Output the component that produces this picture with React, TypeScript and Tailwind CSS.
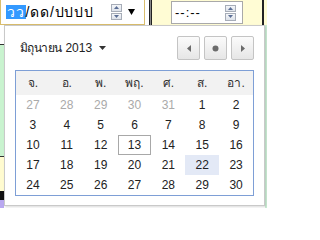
const weekdays = ["จ.", "อ.", "พ.", "พฤ.", "ศ.", "ส.", "อา."];

const weeks = [
  [27, 28, 29, 30, 31, 1, 2],
  [3, 4, 5, 6, 7, 8, 9],
  [10, 11, 12, 13, 14, 15, 16],
  [17, 18, 19, 20, 21, 22, 23],
  [24, 25, 26, 27, 28, 29, 30],
];

function Spinner() {
  return (
    <div className="flex flex-col w-[11px] h-[16px] gap-px">
      <div className="flex-1 flex items-center justify-center border border-[#a7adb8] bg-gradient-to-b from-[#f4f6f9] to-[#dde2ea]">
        <svg width="5" height="3" viewBox="0 0 5 3">
          <path d="M0 3 L2.5 0 L5 3 Z" fill="#5b6e95" />
        </svg>
      </div>
      <div className="flex-1 flex items-center justify-center border border-[#a7adb8] bg-gradient-to-b from-[#f4f6f9] to-[#dde2ea]">
        <svg width="5" height="3" viewBox="0 0 5 3">
          <path d="M0 0 L2.5 3 L5 0 Z" fill="#5b6e95" />
        </svg>
      </div>
    </div>
  );
}

function NavButton({ children }: { children: React.ReactNode }) {
  return (
    <div className="w-[23px] h-[24px] rounded-[2px] border border-[#c4c4c4] bg-gradient-to-b from-[#fbfbfb] to-[#e6e6e6] flex items-center justify-center">
      {children}
    </div>
  );
}

export default function App() {
  return (
    <div
      className="relative w-[267px] h-[208px] overflow-hidden bg-white text-black"
      style={{ fontFamily: '"Liberation Sans", "DejaVu Sans", sans-serif' }}
    >
      {/* page behind the popup */}
      <div className="flex h-[25px]">
        <div className="w-[145px] h-[25px] border-x border-b border-[#d9bd6c] bg-white flex items-center pl-[5px] pr-[9px] text-[14px]">
          <span className="bg-[#3399ff] text-white leading-[14px] px-px tracking-[0.8px]">วว</span>
          <span className="leading-[14px] tracking-[0.8px]">/ดด/ปปปป</span>
          <div className="ml-auto mr-[6px]">
            <Spinner />
          </div>
          <svg width="7" height="6" viewBox="0 0 7 6">
            <path d="M0 0 L7 0 L3.5 6 Z" fill="#000" />
          </svg>
        </div>
        <div className="w-[4px]" />
        <div className="w-[3px] border-x border-[#222] bg-[#888]" />
        <div className="flex-1 bg-[#fffcd4] flex items-start pl-[19px] pt-px">
          <div className="w-[72px] h-[23px] border border-[#a9a9a9] bg-white flex items-center pl-[3px] pr-[6px] text-[13px]">
            <span className="tracking-[1px]">--:--</span>
            <div className="ml-auto">
              <Spinner />
            </div>
          </div>
        </div>
        <div className="w-[2px] bg-[#222]" />
        <div className="w-[3px] bg-[#fffcd4]" />
      </div>
      <div className="flex h-[183px]">
        <div className="w-[4px] flex flex-col">
          <div className="h-[19px] bg-white" />
          <div className="h-px bg-[#333]" />
          <div className="h-[111px] bg-[#c9f3cf]" />
          <div className="h-px bg-[#333]" />
          <div className="h-[34px] bg-[#fffbd0]" />
          <div className="h-[9px] bg-[#111]" />
          <div className="flex-1 bg-[#b9a8f0]" />
        </div>
        <div className="flex-1 bg-white" />
        <div className="w-[2px] bg-[#cdeed6]" />
      </div>

      {/* calendar popup */}
      <div className="absolute left-[4px] top-[25px] w-[261px] h-[181px] bg-white border border-[#c9c9c9] shadow-[1px_1px_2px_rgba(0,0,0,0.15)] px-[10px] pt-[10px]">
        <div className="flex items-center justify-between h-[24px]">
          <div className="flex items-center pl-[5px] text-[12px] text-[#222]">
            <span className="tracking-[-0.6px]">มิถุนายน</span>
            <span className="ml-[4px]">2013</span>
            <svg className="ml-[7px]" width="7" height="4" viewBox="0 0 7 4">
              <path d="M0 0 L7 0 L3.5 4 Z" fill="#333" />
            </svg>
          </div>
          <div className="flex gap-[4px]">
            <NavButton>
              <svg width="4" height="7" viewBox="0 0 4 7">
                <path d="M4 0 L0 3.5 L4 7 Z" fill="#6b6b6b" />
              </svg>
            </NavButton>
            <NavButton>
              <svg width="7" height="7" viewBox="0 0 7 7">
                <circle cx="3.5" cy="3.5" r="3" fill="#6b6b6b" />
              </svg>
            </NavButton>
            <NavButton>
              <svg width="4" height="7" viewBox="0 0 4 7">
                <path d="M0 0 L4 3.5 L0 7 Z" fill="#6b6b6b" />
              </svg>
            </NavButton>
          </div>
        </div>
        <div className="mt-[10px] border border-[#7e9fd6]">
          <div className="grid grid-cols-7 h-[24px] bg-[#f2f2f2] text-[12px] text-[#333]">
            {weekdays.map((d) => (
              <div key={d} className="flex items-center justify-center">
                {d}
              </div>
            ))}
          </div>
          {weeks.map((w, wi) => (
            <div key={wi} className="grid grid-cols-7 h-[20px] text-[12px]">
              {w.map((n, di) => {
                const muted = wi === 0 && di < 5;
                const today = wi === 2 && di === 3;
                const selected = wi === 3 && di === 5;
                return (
                  <div
                    key={di}
                    className={
                      "flex items-center justify-center " +
                      (muted ? "text-[#aaaaaa] " : "text-[#222] ") +
                      (today ? "border border-[#a8a8a8] " : "") +
                      (selected ? "bg-[#e3e9f6] " : "")
                    }
                  >
                    {n}
                  </div>
                );
              })}
            </div>
          ))}
        </div>
      </div>
    </div>
  );
}
